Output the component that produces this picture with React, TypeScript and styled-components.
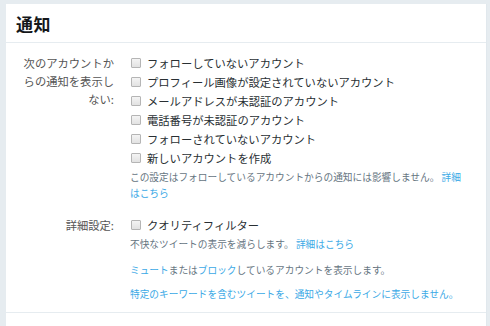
import React from 'react'
import styled, { createGlobalStyle } from 'styled-components'

const GlobalStyle = createGlobalStyle`
  html, body {
    margin: 0;
    padding: 0;
    background: #e6ecf0;
  }
  body {
    font-family: "Noto Sans CJK JP", "Noto Sans", sans-serif;
    color: #333;
  }
`

const Page = styled.div`
  width: 490px;
  height: 326px;
  overflow: hidden;
  padding: 4px 3px 0 6px;
  box-sizing: border-box;
`

const Card = styled.div`
  background: #fff;
  height: 340px;
  border-right: 1px solid #e1e8ed;
`

const Header = styled.div`
  height: 38px;
  display: flex;
  align-items: center;
  padding-left: 10px;
  border-bottom: 1px solid #e6ecf0;

  h1 {
    margin: 0;
    font-size: 17px;
    font-weight: 700;
    color: #14171a;
    letter-spacing: 0.5px;
  }
`

const Body = styled.div`
  padding-top: 10px;
  border-bottom: 1px solid #e6ecf0;
  padding-bottom: 10px;
`

const Group = styled.div<{ $gap?: number }>`
  display: grid;
  grid-template-columns: 108px 1fr;
  column-gap: 16px;
  margin-top: ${p => p.$gap || 0}px;
`

const Label = styled.div`
  padding-left: 14px;
  text-align: right;
  font-size: 11.3px;
  line-height: 18px;
  color: #555;
  padding-top: 1px;
`

const Controls = styled.div`
  display: flex;
  flex-direction: column;
  padding-right: 12px;
`

const Row = styled.label`
  display: flex;
  align-items: center;
  height: 19px;
  font-size: 11.3px;
  color: #292f33;
`

const Box = styled.input.attrs({ type: 'checkbox' })`
  appearance: none;
  margin: 0 6px 0 1px;
  width: 10px;
  height: 10px;
  border: 1px solid #b5b5b5;
  border-radius: 1px;
  background: linear-gradient(#f4f4f4, #e2e2e2);
  box-sizing: border-box;
`

const Help = styled.p<{ $gap?: number; $link?: boolean }>`
  margin: ${p => p.$gap || 0}px 0 0;
  font-size: 9.7px;
  line-height: 16px;
  color: ${p => (p.$link ? '#3ba9e6' : '#66757f')};
`

const Link = styled.a`
  color: #3ba9e6;
  text-decoration: none;
`

const accounts = [
  'フォローしていないアカウント',
  'プロフィール画像が設定されていないアカウント',
  'メールアドレスが未認証のアカウント',
  '電話番号が未認証のアカウント',
  'フォローされていないアカウント',
  '新しいアカウントを作成',
]

const App = () => {
  return (
    <Page>
      <GlobalStyle />
      <Card>
        <Header>
          <h1>通知</h1>
        </Header>
        <Body>
          <Group>
            <Label>次のアカウントからの通知を表示しない:</Label>
            <Controls>
              {accounts.map(a => (
                <Row key={a}>
                  <Box />
                  {a}
                </Row>
              ))}
              <Help $gap={2}>
                この設定はフォローしているアカウントからの通知には影響しません。 <Link href="#">詳細<br />はこちら</Link>
              </Help>
            </Controls>
          </Group>
          <Group $gap={14}>
            <Label>詳細設定:</Label>
            <Controls>
              <Row>
                <Box />
                クオリティフィルター
              </Row>
              <Help $gap={2}>
                不快なツイートの表示を減らします。 <Link href="#">詳細はこちら</Link>
              </Help>
              <Help $gap={10}>
                <Link href="#">ミュート</Link>または<Link href="#">ブロック</Link>しているアカウントを表示します。
              </Help>
              <Help $gap={8} $link>
                特定のキーワードを含むツイートを、通知やタイムラインに表示しません。
              </Help>
            </Controls>
          </Group>
        </Body>
      </Card>
    </Page>
  )
}

export default App
